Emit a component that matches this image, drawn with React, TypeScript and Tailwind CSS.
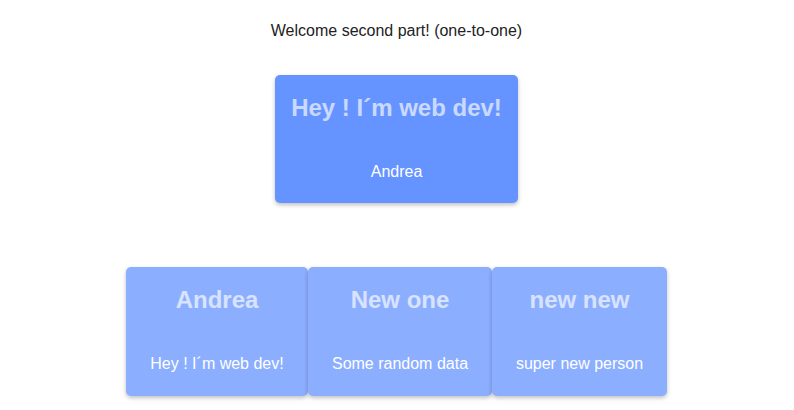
const people = [
  { name: 'Andrea', about: 'Hey ! I´m web dev!', width: 'w-[182px]' },
  { name: 'New one', about: 'Some random data', width: 'w-[184px]' },
  { name: 'new new', about: 'super new person', width: 'w-[175px]' },
]

export default function App() {
  return (
    <div
      className="min-h-[410px] bg-white flex flex-col items-center pr-[1px]"
      style={{ fontFamily: '"Liberation Sans", Arial, sans-serif' }}
    >
      {/* Header */}
      <p className="pt-[22px] text-[16px] leading-[18px] text-[#222]">
        Welcome second part! (one-to-one)
      </p>

      {/* Featured card */}
      <div className="mt-[35px] w-[243px] h-[128px] rounded-[5px] bg-[#6593ff] shadow-[0_2px_4px_rgba(0,0,0,0.25)] flex flex-col items-center pt-[19px]">
        <h1 className="text-[24px] leading-[28px] font-bold text-white/65">Hey ! I´m web dev!</h1>
        <p className="mt-[41px] text-[16px] leading-[18px] text-white">Andrea</p>
      </div>

      {/* People row */}
      <div className="mt-[64px] flex">
        {people.map((p) => (
          <div
            key={p.name}
            className={`${p.width} h-[129px] rounded-[5px] bg-[#8caeff] shadow-[0_2px_4px_rgba(0,0,0,0.25)] flex flex-col items-center pt-[19px]`}
          >
            <h2 className="text-[24px] leading-[28px] font-bold text-white/65">{p.name}</h2>
            <p className="mt-[41px] text-[16px] leading-[18px] text-white">{p.about}</p>
          </div>
        ))}
      </div>
    </div>
  )
}
